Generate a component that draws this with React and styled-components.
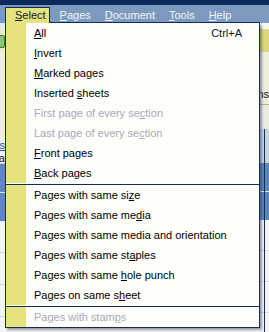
import React from 'react';
import styled, { createGlobalStyle } from 'styled-components';

const GlobalStyle = createGlobalStyle`
  html, body { margin: 0; padding: 0; }
  body {
    font-family: "Liberation Sans", Arial, sans-serif;
    font-size: 11px;
    background: #f2f2f0;
  }
`;

const NAVY = '#102d5e';
const YELLOW = '#e6e27e';

const Screen = styled.div`
  position: relative;
  width: 269px;
  height: 332px;
  overflow: hidden;
  display: flex;
  flex-direction: column;
`;

const TitleStrip = styled.div`
  height: 5px;
  background: #0c2a5b;
`;

const MenuBar = styled.div`
  height: 18px;
  display: flex;
  align-items: flex-end;
  padding-left: 5px;
  background: #7b9abd;
`;

const BarItem = styled.div`
  height: 15px;
  padding: 0 3px 0 9px;
  border: 1px solid ${(p) => (p.$open ? NAVY : 'transparent')};
  border-bottom: 0;
  background: ${(p) => (p.$open ? YELLOW : 'transparent')};
  color: ${(p) => (p.$open ? '#0a1a33' : '#f3f6fa')};
  line-height: 14px;
  white-space: nowrap;
`;

const Workspace = styled.div`
  flex: 1;
  display: flex;
`;

const Strip = styled.div`
  width: ${(p) => p.$w}px;
  display: flex;
  flex-direction: column;
  overflow: hidden;
`;

const Middle = styled.div`
  flex: 1;
  background: #f3f3ef;
`;

const Band = styled.div`
  height: ${(p) => p.$h}px;
  flex: none;
  background: ${(p) => p.$bg};
  border-bottom: ${(p) => (p.$line ? `1px solid ${p.$line}` : 'none')};
  display: flex;
  align-items: ${(p) => p.$align || 'center'};
  justify-content: ${(p) => p.$justify || 'flex-start'};
  overflow: hidden;
  white-space: nowrap;
  color: #111;
  font-size: 11px;
  line-height: 12px;
`;

const GridBand = styled.div`
  height: ${(p) => (p.$h ? `${p.$h}px` : 'auto')};
  flex: ${(p) => (p.$h ? 'none' : '1')};
  background:
    linear-gradient(to right, transparent 5px, ${NAVY} 5px, ${NAVY} 6px, transparent 6px),
    repeating-linear-gradient(to bottom, ${(p) => p.$bg} 0 ${(p) => p.$rows - 1}px, ${(p) => p.$rule} ${(p) => p.$rows - 1}px ${(p) => p.$rows}px);
`;

const HeaderBand = styled.div`
  height: 57px;
  flex: none;
  background: repeating-linear-gradient(to bottom, #6286b8 0 28px, #dfe6f0 28px 29px);
`;

const LeftGrid = styled.div`
  flex: 1;
  background: repeating-linear-gradient(to bottom, #f3f3f1 0 31px, #d4d8de 31px 32px);
`;

const Icon = styled.span`
  display: block;
  width: 4px;
  height: 11px;
  margin-left: -1px;
  border: 1px solid #3f7a3a;
  border-radius: 2px;
  background: #8cc47a;
`;

const LinkGlyph = styled.span`
  color: #2256a8;
  text-decoration: underline;
  margin: 0 0 1px 1px;
`;

const Menu = styled.div`
  position: absolute;
  left: 5px;
  top: 23px;
  width: 253px;
  border: 1px solid ${NAVY};
  border-top: 0;
  background: linear-gradient(to right, ${YELLOW} 0 20px, #fdfdfa 20px);
  box-shadow: 2px 2px 2px rgba(40, 52, 75, 0.45);

  &::before {
    content: '';
    position: absolute;
    top: -1px;
    left: 43px;
    right: -1px;
    height: 1px;
    background: ${NAVY};
  }
`;

const Row = styled.div`
  height: 20px;
  display: flex;
  align-items: center;
  justify-content: space-between;
  padding: 0 17px 0 28px;
  line-height: 20px;
  white-space: nowrap;
  color: ${(p) => (p.$disabled ? '#a4abb9' : '#000')};
`;

const Shortcut = styled.span`
  color: #0b1a33;
`;

const Separator = styled.div`
  height: 1px;
  border-top: 1px solid #fdfdfa;
  background: ${NAVY};
`;

const menuItems = [
  { label: '&All', shortcut: 'Ctrl+A' },
  { label: '&Invert' },
  { label: '&Marked pages' },
  { label: 'Inserted &sheets' },
  { label: 'First page of every se&ction', disabled: true },
  { label: 'Last page of every se&ction', disabled: true },
  { label: '&Front pages' },
  { label: '&Back pages' },
  { sep: true },
  { label: 'Pages with same si&ze' },
  { label: 'Pages with same me&dia' },
  { label: 'Pages with same media and orientation' },
  { label: 'Pages with same st&aples' },
  { label: 'Pages with same &hole punch' },
  { label: 'Pages on same s&heet' },
  { sep: true },
  { label: 'Pages with stam&ps', disabled: true },
];

const barItems = ['&Select', '&Pages', '&Document', '&Tools', '&Help'];

// "&x" marks the access key letter
const Label = ({ text }) => {
  const i = text.indexOf('&');
  if (i < 0) return <span>{text}</span>;
  return (
    <span>
      {text.slice(0, i)}
      <u>{text[i + 1]}</u>
      {text.slice(i + 2)}
    </span>
  );
};

const App = () => {
  return (
    <>
      <GlobalStyle />
      <Screen>
        <TitleStrip />
        <MenuBar>
          {barItems.map((b, i) => (
            <BarItem key={b} $open={i === 0}>
              <Label text={b} />
            </BarItem>
          ))}
        </MenuBar>

        <Workspace>
          <Strip $w={5}>
            <Band $h={7} $bg="#e8e8e2" />
            <Band $h={22} $bg="#eeebcd">
              <Icon />
            </Band>
            <Band $h={100} $bg="#efedde" $align="flex-end" $justify="flex-end">
              <LinkGlyph>s</LinkGlyph>
            </Band>
            <Band $h={11} $bg="#f1f1ec" $line="#c9c9c0" $justify="flex-end">
              Pa
            </Band>
            <HeaderBand />
            <LeftGrid />
          </Strip>

          <Middle />

          <Strip $w={10}>
            <Band $h={6} $bg="#f6f6f2" />
            <Band $h={23} $bg="#dcd67e" />
            <Band $h={52} $bg="#edecdd" $line="#b9b57c" $align="flex-end" $justify="flex-end">
              <span style={{ paddingBottom: 4 }}>ns</span>
            </Band>
            <Band $h={24} $bg="#ebeae2" />
            <GridBand $h={34} $bg="#c9d3df" $rule="#c9d3df" $rows={34} />
            <GridBand $h={57} $bg="#5f84b8" $rule="#dfe6f0" $rows={29} />
            <GridBand $bg="#f3f3f3" $rule="#d6dae0" $rows={31} />
          </Strip>
        </Workspace>

        <Menu>
          {menuItems.map((m, i) =>
            m.sep ? (
              <Separator key={i} />
            ) : (
              <Row key={i} $disabled={m.disabled}>
                <Label text={m.label} />
                {m.shortcut && <Shortcut>{m.shortcut}</Shortcut>}
              </Row>
            )
          )}
        </Menu>
      </Screen>
    </>
  );
};

export default App;
